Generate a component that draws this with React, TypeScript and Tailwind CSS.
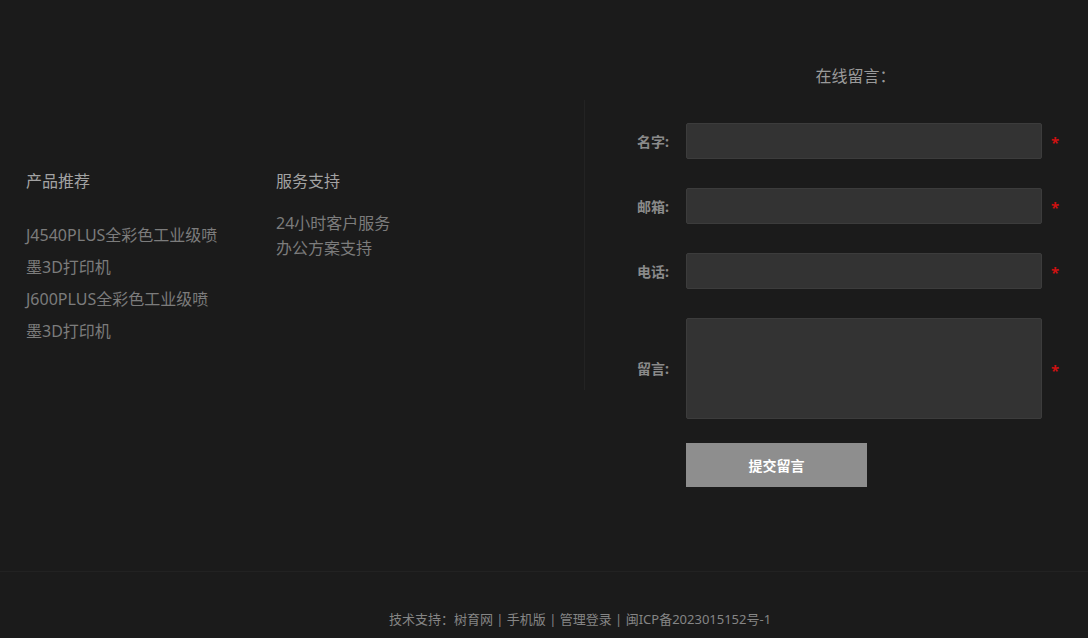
const font = "font-['Noto_Sans','Noto_Sans_CJK_SC',sans-serif]";

const products = ["J4540PLUS全彩色工业级喷墨3D打印机", "J600PLUS全彩色工业级喷墨3D打印机"];
const services = ["24小时客户服务", "办公方案支持"];

function Field({ label, tall }: { label: string; tall?: boolean }) {
  return (
    <div className="flex items-center">
      <label className="w-[55px] pr-[1px] text-right text-[14px] font-bold text-[#8a8a8a]">{label}</label>
      <div className="ml-[16px]">
        {tall ? (
          <textarea className="block h-[101px] w-[356px] resize-none rounded-[2px] border border-[#3c3c3c] bg-[#333333] outline-none" />
        ) : (
          <input className="block h-[36px] w-[356px] rounded-[2px] border border-[#3c3c3c] bg-[#333333] outline-none" />
        )}
      </div>
      <span className="ml-[9px] pt-[3px] text-[15px] font-bold leading-none text-[#cc1111]">*</span>
    </div>
  );
}

export default function App() {
  return (
    <div className={`${font} min-h-screen w-full bg-[#1b1b1b]`}>
      <div className="flex h-[571px] items-start pt-[66px]">
        {/* left: links */}
        <div className="mt-[34px] flex h-[290px] w-[585px] border-r border-[#232323] pl-[26px] pt-[71px]">
          <div className="w-[250px]">
            <h3 className="text-[16px] leading-[20px] text-[#a3a3a3]">产品推荐</h3>
            <ul className="mt-[28px] w-[194px]">
              {products.map((p) => (
                <li key={p} className="text-[16px] leading-[32px] text-[#7c7c7c]">
                  {p}
                </li>
              ))}
            </ul>
          </div>
          <div className="w-[250px]">
            <h3 className="text-[16px] leading-[20px] text-[#a3a3a3]">服务支持</h3>
            <ul className="mt-[20px]">
              {services.map((s) => (
                <li key={s} className="text-[16px] leading-[25px] text-[#7c7c7c]">
                  {s}
                </li>
              ))}
            </ul>
          </div>
        </div>

        {/* right: message form */}
        <div className="flex-1 pl-[30px]">
          <h2 className="pl-[8px] text-center text-[16px] leading-[20px] text-[#9a9a9a]">在线留言：</h2>
          <div className="mt-[37px] flex flex-col gap-[29px]">
            <Field label="名字:" />
            <Field label="邮箱:" />
            <Field label="电话:" />
            <Field label="留言:" tall />
          </div>
          <div className="mt-[24px] pl-[71px]">
            <button className="h-[44px] w-[181px] bg-[#8e8e8e] text-[14px] font-bold text-white">提交留言</button>
          </div>
        </div>
      </div>

      <footer className="border-t border-[#222222] pb-[9px] pl-[72px] pt-[37px] text-center text-[13px] leading-[20px] text-[#858585]">
        技术支持：树育网 | 手机版 | 管理登录 | 闽ICP备2023015152号-1
      </footer>
    </div>
  );
}
